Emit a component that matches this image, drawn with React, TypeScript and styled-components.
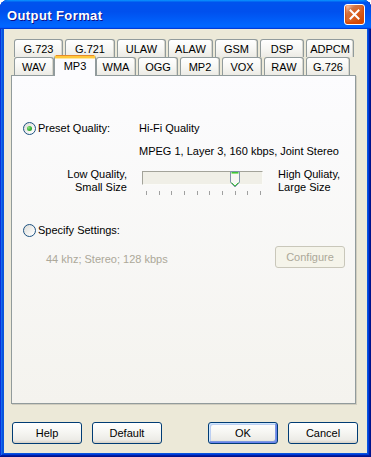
import styled, { createGlobalStyle } from "styled-components";

const GlobalStyle = createGlobalStyle`
  html, body {
    margin: 0;
    padding: 0;
    background: #fff;
  }
  body {
    font-family: Tahoma, "Liberation Sans", Arial, sans-serif;
    font-size: 11px;
    color: #000;
  }
`;

const Window = styled.div`
  width: 371px;
  height: 457px;
  display: flex;
  flex-direction: column;
  background: #0855dd;
  border-radius: 8px 8px 0 0;
  overflow: hidden;
  box-shadow: inset -1px -1px #00138c, inset 1px 1px #0831d9,
    inset -2px -2px #001ea0, inset 2px 2px #166aee, inset -3px -3px #003bda,
    inset 3px 3px #0855dd;
`;

const TitleBar = styled.div`
  height: 29px;
  flex: none;
  display: flex;
  align-items: center;
  justify-content: space-between;
  padding: 0 6px 0 7px;
  background: linear-gradient(
    180deg,
    #0997ff,
    #0053ee 8%,
    #0050ee 40%,
    #06f 88%,
    #06f 93%,
    #005bff 95%,
    #003dd7 96%,
    #003dd7
  );
`;

const Title = styled.div`
  font-family: "Liberation Sans", Arial, sans-serif;
  font-weight: bold;
  font-size: 13px;
  color: #fff;
  letter-spacing: 0.4px;
  text-shadow: 1px 1px #0f1089;
  margin-top: 1px;
`;

const CloseButton = styled.div`
  width: 19px;
  height: 19px;
  border: 1px solid #fff;
  border-radius: 3px;
  display: flex;
  align-items: center;
  justify-content: center;
  background: radial-gradient(
    circle at 90% 90%,
    #cc4600 0,
    #dc6527 55%,
    #cd7546 70%,
    #ffccb2 90%,
    #fff 100%
  );
  box-shadow: inset 0 -1px 2px 1px #da4600;
`;

const Body = styled.div`
  flex: 1;
  margin: 0 4px 4px;
  background: #ece9d8;
  padding: 10px 11px 9px 7px;
  display: flex;
  flex-direction: column;
`;

const TabRow = styled.div`
  display: flex;
  align-items: flex-end;
  gap: 2px;
  height: 18px;
  padding-left: 3px;
`;

const Tab = styled.div<{ $w: number; $active?: boolean }>`
  box-sizing: border-box;
  width: ${(p) => p.$w}px;
  height: ${(p) => (p.$active ? 21 : 18)}px;
  margin: ${(p) => (p.$active ? "0 -2px -1px" : "0")};
  position: relative;
  z-index: ${(p) => (p.$active ? 2 : 0)};
  border: 1px solid #919b9c;
  border-bottom: none;
  border-radius: 3px 3px 0 0;
  display: flex;
  align-items: center;
  justify-content: center;
  padding-bottom: ${(p) => (p.$active ? 2 : 0)}px;
  background: ${(p) =>
    p.$active
      ? "#fcfcfe"
      : "linear-gradient(180deg, #fff 0%, #f7f7f4 50%, #ecebe5 100%)"};
  border-top: ${(p) => (p.$active ? "3px solid #ffc83c" : "1px solid #919b9c")};
  box-shadow: ${(p) =>
    p.$active ? "inset 0 1px 0 #ffe7a2" : "inset -1px 0 #d8d6cc"};
  &::before {
    content: "";
    display: ${(p) => (p.$active ? "block" : "none")};
    position: absolute;
    top: -3px;
    left: 1px;
    right: 1px;
    height: 1px;
    background: #e68b2c;
  }
`;

const Panel = styled.div`
  box-sizing: border-box;
  height: 329px;
  border: 1px solid #919b9c;
  background: linear-gradient(180deg, #fcfcfe 0%, #f4f3ee 100%);
  box-shadow: 1px 1px 0 #d0cdbf;
  padding: 46px 10px 0 11px;
  display: flex;
  flex-direction: column;
`;

const Row = styled.div<{ $mt?: number; $indent?: number }>`
  display: flex;
  align-items: center;
  margin-top: ${(p) => p.$mt ?? 0}px;
  padding-left: ${(p) => p.$indent ?? 0}px;
  line-height: 13px;
`;

const RadioLabel = styled.label<{ $w?: number }>`
  display: flex;
  align-items: center;
  gap: 2px;
  width: ${(p) => (p.$w ? `${p.$w}px` : "auto")};
`;

const Radio = styled.span<{ $checked?: boolean }>`
  box-sizing: border-box;
  width: 13px;
  height: 13px;
  border-radius: 50%;
  border: 1px solid #1c5180;
  background: linear-gradient(135deg, #dcdcd7 0%, #fff 90%);
  display: flex;
  align-items: center;
  justify-content: center;
  &::after {
    content: "";
    display: ${(p) => (p.$checked ? "block" : "none")};
    width: 5px;
    height: 5px;
    border-radius: 50%;
    background: radial-gradient(circle at 35% 35%, #8fe57e 0%, #3cb43b 50%, #1f9a1f 100%);
  }
`;

const SliderRow = styled.div`
  display: flex;
  align-items: flex-start;
  margin-top: 10px;
  line-height: 13px;
`;

const SideLabel = styled.div<{ $align: "left" | "right" }>`
  width: ${(p) => (p.$align === "right" ? "104px" : "auto")};
  text-align: ${(p) => p.$align};
`;

const Slider = styled.div`
  width: 121px;
  margin: 3px 15px 0;
  display: flex;
  flex-direction: column;
  position: relative;
`;

const Track = styled.div`
  box-sizing: border-box;
  height: 14px;
  background: #f0efe7;
  border-top: 1px solid #a3a39a;
  border-left: 1px solid #a3a39a;
  border-bottom: 1px solid #fbfbf8;
  border-right: 1px solid #fbfbf8;
`;

const Ticks = styled.div`
  display: flex;
  justify-content: space-between;
  padding: 0 2px 0 4px;
  margin-top: 6px;
`;

const Tick = styled.span`
  width: 1px;
  height: 4px;
  background: #a0a0a0;
`;

const Thumb = styled.svg`
  position: absolute;
  top: 0;
`;

const Muted = styled.span`
  color: #aca899;
  padding-top: 3px;
`;

const SettingsRow = styled.div`
  display: flex;
  align-items: center;
  justify-content: space-between;
  padding-left: 23px;
  margin-top: 9px;
`;

const Button = styled.button<{ $default?: boolean }>`
  box-sizing: border-box;
  width: 70px;
  height: 22px;
  font-family: Tahoma, "Liberation Sans", Arial, sans-serif;
  font-size: 11px;
  color: #000;
  border: 1px solid #003c74;
  border-radius: 3px;
  padding: 0;
  background: linear-gradient(180deg, #fff 0%, #f5f5f1 50%, #ecebe6 85%, #d6d0c5 100%);
  box-shadow: ${(p) =>
    p.$default
      ? "inset -1px -1px #6982ee, inset 1px 1px #cee7ff, inset -2px -2px #7c99e0, inset 2px 2px #bccff2"
      : "none"};
  &:disabled {
    border-color: #c9c7ba;
    color: #aca899;
    background: #f5f4ea;
  }
`;

const ButtonRow = styled.div`
  display: flex;
  gap: 10px;
  margin: 18px -2px 0 1px;
`;

const Spacer = styled.div`
  flex: 1;
`;

const topTabs = [
  { label: "G.723", w: 49 },
  { label: "G.721", w: 50 },
  { label: "ULAW", w: 49 },
  { label: "ALAW", w: 45 },
  { label: "GSM", w: 43 },
  { label: "DSP", w: 44 },
  { label: "ADPCM", w: 48 },
];

const bottomTabs = [
  { label: "WAV", w: 40 },
  { label: "MP3", w: 42, active: true },
  { label: "WMA", w: 40 },
  { label: "OGG", w: 40 },
  { label: "MP2", w: 40 },
  { label: "VOX", w: 40 },
  { label: "RAW", w: 40 },
  { label: "G.726", w: 44 },
];

const TICKS = 10;
const value = 7;

export default function App() {
  const thumbLeft = 4 + (value * 115) / (TICKS - 1) - 5;
  return (
    <>
      <GlobalStyle />
      <Window>
        <TitleBar>
          <Title>Output Format</Title>
          <CloseButton>
            <svg width="11" height="11" viewBox="0 0 11 11">
              <path d="M1.5 1.5 L9.5 9.5 M9.5 1.5 L1.5 9.5" stroke="#fff" strokeWidth="2" strokeLinecap="square" />
            </svg>
          </CloseButton>
        </TitleBar>
        <Body>
          <TabRow>
            {topTabs.map((t) => (
              <Tab key={t.label} $w={t.w}>
                {t.label}
              </Tab>
            ))}
          </TabRow>
          <TabRow>
            {bottomTabs.map((t) => (
              <Tab key={t.label} $w={t.w} $active={t.active}>
                {t.label}
              </Tab>
            ))}
          </TabRow>
          <Panel>
            <Row>
              <RadioLabel $w={116}>
                <Radio $checked />
                Preset Quality:
              </RadioLabel>
              <span>Hi-Fi Quality</span>
            </Row>
            <Row $mt={10} $indent={116}>
              MPEG 1, Layer 3, 160 kbps, Joint Stereo
            </Row>
            <SliderRow>
              <SideLabel $align="right">
                Low Quality,
                <br />
                Small Size
              </SideLabel>
              <Slider>
                <Track />
                <Ticks>
                  {Array.from({ length: TICKS }).map((_, i) => (
                    <Tick key={i} />
                  ))}
                </Ticks>
                <Thumb width="10" height="17" viewBox="0 0 10 17" style={{ left: thumbLeft }}>
                  <path d="M0.5 0.5 H9.5 V11.5 L5 16 L0.5 11.5 Z" fill="#f7f7f4" stroke="#7f93ab" />
                  <path d="M1.5 1.5 H8.5" stroke="#3cc43a" />
                  <path d="M1.5 2.5 H8.5" stroke="#8de27f" />
                  <path d="M1.5 11.5 L5 15 L8.5 11.5" stroke="#3cc43a" fill="none" />
                </Thumb>
              </Slider>
              <SideLabel $align="left">
                High Quliaty,
                <br />
                Large Size
              </SideLabel>
            </SliderRow>
            <Row $mt={29}>
              <RadioLabel>
                <Radio />
                Specify Settings:
              </RadioLabel>
            </Row>
            <SettingsRow>
              <Muted>44 khz; Stereo; 128 kbps</Muted>
              <Button disabled>Configure</Button>
            </SettingsRow>
          </Panel>
          <ButtonRow>
            <Button>Help</Button>
            <Button>Default</Button>
            <Spacer />
            <Button $default>OK</Button>
            <Button>Cancel</Button>
          </ButtonRow>
        </Body>
      </Window>
    </>
  );
}
